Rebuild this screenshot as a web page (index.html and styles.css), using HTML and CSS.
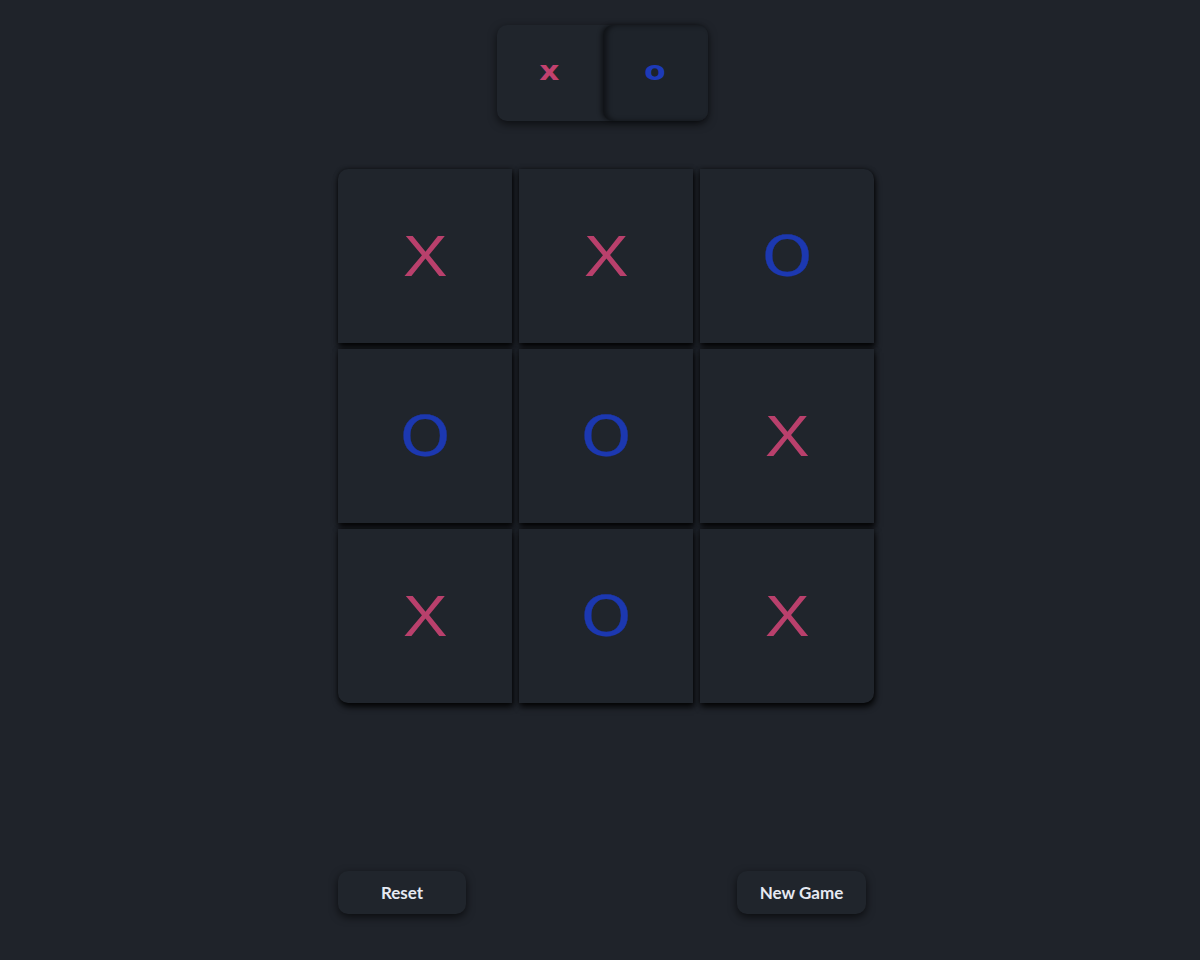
FILE: index.html
```html
<!DOCTYPE html>
<html>
<head>
<meta charset="utf-8">
<title>Tic Tac Toe</title>
<link rel="stylesheet" href="styles.css">
</head>
<body>
<main class="app">
  <div class="toggle">
    <div class="toggle-half toggle-x"><span class="mini-x">x</span></div>
    <div class="toggle-half toggle-o active"><span class="mini-o">o</span></div>
  </div>
  <div class="board">
    <div class="cell tl"><span class="mark x">X</span></div>
    <div class="cell"><span class="mark x">X</span></div>
    <div class="cell tr"><span class="mark o">O</span></div>
    <div class="cell"><span class="mark o">O</span></div>
    <div class="cell"><span class="mark o">O</span></div>
    <div class="cell"><span class="mark x">X</span></div>
    <div class="cell bl"><span class="mark x">X</span></div>
    <div class="cell"><span class="mark o">O</span></div>
    <div class="cell br"><span class="mark x">X</span></div>
  </div>
  <div class="actions">
    <button class="btn">Reset</button>
    <button class="btn">New Game</button>
  </div>
</main>
</body>
</html>
```
FILE: styles.css
```css
html, body {
  margin: 0;
  padding: 0;
  background: #1f232a;
  height: 100%;
}
body {
  font-family: Lato, "Open Sans", sans-serif;
}
.app {
  display: flex;
  flex-direction: column;
  align-items: center;
  padding-top: 25px;
}
.toggle {
  display: flex;
  width: 211px;
  height: 96px;
  border-radius: 10px;
  background: #20252c;
  box-shadow: 0 3px 9px rgba(0,0,0,0.6);
  margin-left: 5px;
}
.toggle-half {
  flex: 1;
  display: flex;
  align-items: center;
  justify-content: center;
  border-radius: 10px;
}
.toggle-o.active {
  background: #1e232a;
  box-shadow: inset 4px 0 5px rgba(0,0,0,0.45), -2px 0 4px rgba(0,0,0,0.45);
}
.mini-x,
.mini-o {
  font-family: "DejaVu Sans", sans-serif;
  font-weight: 700;
  font-size: 26px;
  line-height: 1;
  transform: translateY(-2px) scaleX(1.2);
}
.mini-x { color: #c2416e; }
.mini-o { color: #1d3ab8; }
.board {
  margin-top: 48px;
  margin-left: 12px;
  display: grid;
  grid-template-columns: repeat(3, 174px);
  grid-template-rows: repeat(3, 174px);
  column-gap: 7px;
  row-gap: 6px;
}
.cell {
  background: #20252c;
  display: flex;
  align-items: center;
  justify-content: center;
  box-shadow: 1px 4px 6px rgba(0,0,0,0.85), 0 0 4px rgba(0,0,0,0.5);
}
.tl { border-top-left-radius: 10px; }
.tr { border-top-right-radius: 10px; }
.bl { border-bottom-left-radius: 10px; }
.br { border-bottom-right-radius: 10px; }
.mark {
  line-height: 1;
  display: block;
  font-weight: 400;
}
.mark.x {
  color: #b9406c;
  font-family: "Liberation Sans", sans-serif;
  font-size: 58px;
  transform: scaleX(1.15);
}
.mark.o {
  color: #1c38b0;
  font-family: "DejaVu Sans", sans-serif;
  font-size: 56px;
  transform: scaleX(1.14);
  -webkit-text-stroke: 0.3px #1c38b0;
}
.actions {
  margin-top: 168px;
  width: 528px;
  margin-left: 4px;
  display: flex;
  justify-content: space-between;
}
.btn {
  font-family: Lato, sans-serif;
  font-weight: 700;
  font-size: 17px;
  color: #e6e9f2;
  background: #20252c;
  border: none;
  border-radius: 10px;
  height: 43px;
  padding: 0;
  width: 128px;
  box-shadow: 0 3px 9px rgba(0,0,0,0.65);
}
.btn:last-child { width: 129px; }
```
